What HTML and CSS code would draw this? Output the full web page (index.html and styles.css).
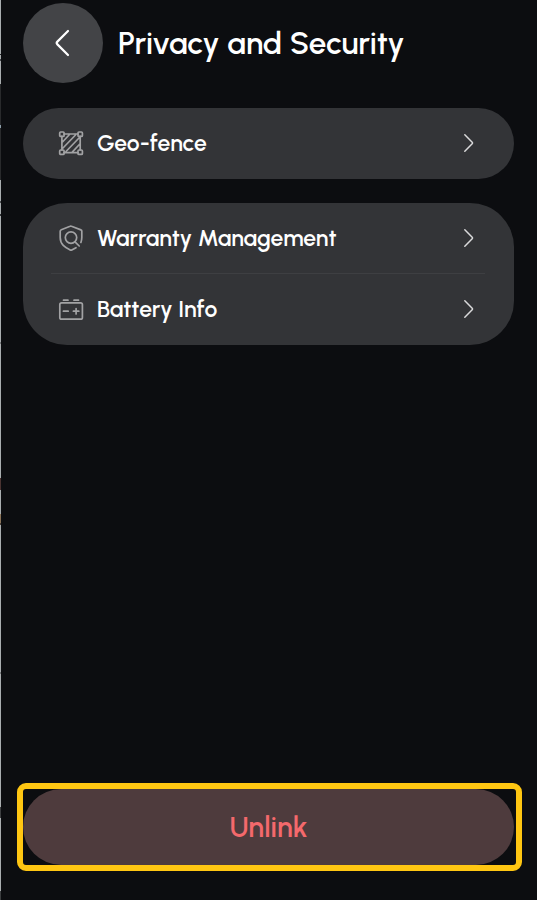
FILE: index.html
```html
<!DOCTYPE html>
<html lang="en">
<head>
    <meta charset="UTF-8">
    <meta name="viewport" content="width=device-width, initial-scale=1.0">
    <title>Privacy and Security</title>
    <link rel="stylesheet" href="styles.css">
</head>
<body>
    <div class="screen">
        <header class="header">
            <button class="back-btn" aria-label="Back">
                <svg width="80" height="80" viewBox="0 0 80 80">
                    <path d="M45 28 L34.4 38.6 Q33 40 34.4 41.4 L45 52"/>
                </svg>
            </button>
            <h1 class="title">Privacy and Security</h1>
        </header>

        <main class="menu">
            <section class="card">
                <a class="row">
                    <svg class="row-icon" width="26" height="28" viewBox="0 0 26 28">
                        <rect x="1.7" y="3" width="4.4" height="4.4" rx="1"/>
                        <rect x="20" y="3" width="4.4" height="4.4" rx="1"/>
                        <rect x="1.7" y="21" width="4.4" height="4.4" rx="1"/>
                        <rect x="20" y="21" width="4.4" height="4.4" rx="1"/>
                        <path d="M6 5H20M6 23.6H20M3.9 7.4V21M22.2 7.4V21M4.5 13 L11.5 5.5M4.5 19.5 L17.5 6M8 22.5 L21.5 8.5M14.5 22.8 L21.8 15"/>
                    </svg>
                    <span class="row-label">Geo-fence</span>
                    <svg class="chevron" width="12" height="20" viewBox="0 0 12 20">
                        <path d="M1.8 1.8 L9.2 9.2 Q10 10 9.2 10.8 L1.8 18.2"/>
                    </svg>
                </a>
            </section>

            <section class="card card-double">
                <a class="row">
                    <svg class="row-icon" width="26" height="28" viewBox="0 0 26 28">
                        <path d="M22.9 18.5 C23.4 17 23.8 15.5 23.8 13.5 V7.1 Q23.8 6.2 22.9 5.9 L13.5 2.2 Q12.8 1.9 12.1 2.2 L3.3 5.7 Q2.2 6.2 2.2 7.2 V13.5 C2.2 20.5 7 23.4 12.2 26 Q13 26.4 13.8 26 L18 23.7"/>
                        <circle cx="13" cy="13.6" r="5.7"/>
                        <path d="M17 17.8 L21.2 22"/>
                    </svg>
                    <span class="row-label">Warranty Management</span>
                    <svg class="chevron" width="12" height="20" viewBox="0 0 12 20">
                        <path d="M1.8 1.8 L9.2 9.2 Q10 10 9.2 10.8 L1.8 18.2"/>
                    </svg>
                </a>
                <div class="divider"></div>
                <a class="row">
                    <svg class="row-icon" width="26" height="28" viewBox="0 0 26 28">
                        <rect x="1.8" y="7.8" width="22.6" height="16.4" rx="1.8"/>
                        <path d="M5.5 5.2H10M16 5.2H20.5M5.4 16.2H10.2M15.4 16.2H20.8M18.1 13.5V18.9"/>
                    </svg>
                    <span class="row-label">Battery Info</span>
                    <svg class="chevron" width="12" height="20" viewBox="0 0 12 20">
                        <path d="M1.8 1.8 L9.2 9.2 Q10 10 9.2 10.8 L1.8 18.2"/>
                    </svg>
                </a>
            </section>
        </main>

        <div class="highlight">
            <button class="unlink-btn">Unlink</button>
        </div>
    </div>
</body>
</html>
```
FILE: styles.css
```css
* {
    box-sizing: border-box;
}

body {
    margin: 0;
    font-family: Urbanist, Lato, sans-serif;
    background: #0c0d10;
    color: #fff;
}

.screen {
    display: flex;
    flex-direction: column;
    height: 900px;
    padding: 3px 15px 29px 17px;
    /* sliver of the page behind the left edge */
    background: linear-gradient(to bottom,
        #a9adaf 0 54px, #25272a 54px 55px, #a9adaf 55px 59px, #45484b 59px 61px,
        #a9adaf 61px 84px, #292a2c 84px 125px, #8c9da8 125px 128px,
        #292a2c 128px 180px, #a9adaf 180px 201px, #4d4f51 201px 203px,
        #a9adaf 203px 214px, #35373a 214px 216px, #a9adaf 216px 342px,
        #77797b 342px 344px, #a9adaf 344px 478px, #4b3432 478px 490px,
        #a9adaf 490px 514px, #8b745a 514px 523px, #4b4038 523px 525px,
        #a9adaf 525px 672px, #77797b 672px 674px, #a9adaf 674px 807px,
        #3d3f41 807px 818px, #a9adaf 818px 891px, #3c3e40 891px) left top / 1px 900px no-repeat;
}

.header {
    display: flex;
    align-items: center;
    gap: 15px;
    height: 80px;
    padding-left: 6px;
}

.back-btn {
    width: 80px;
    height: 80px;
    padding: 0;
    border: none;
    border-radius: 50%;
    background: #434447;
}

.back-btn svg {
    display: block;
    fill: none;
    stroke: #fff;
    stroke-width: 2.2;
    stroke-linecap: round;
}

.title {
    margin: 0;
    padding-bottom: 1px;
    font-size: 31.4px;
    font-weight: 600;
    line-height: 40px;
    white-space: nowrap;
}

.menu {
    flex: 1;
    display: flex;
    flex-direction: column;
    gap: 24px;
    padding: 25px 8px 0 6px;
}

.card {
    height: 71px;
    padding: 0 29px 0 28px;
    border-radius: 44px;
    background: #333437;
}

.card-double {
    height: 142px;
}

.row {
    display: flex;
    align-items: center;
    height: 70px;
    padding: 0 10px 0 7px;
}

.row-icon,
.chevron {
    flex: none;
    fill: none;
    stroke-linecap: round;
    stroke-linejoin: round;
}

.row-icon {
    margin-right: 13px;
    stroke: #a2a2a4;
    stroke-width: 1.7;
}

.row-label {
    flex: 1;
    font-size: 22.9px;
    font-weight: 600;
    line-height: 30px;
    white-space: nowrap;
}

.chevron {
    stroke: #dadadb;
    stroke-width: 1.5;
}

.divider {
    height: 1px;
    background: #3e3f42;
}

.highlight {
    height: 88px;
    padding-right: 2px;
    border: 6px solid #ffc612;
    border-radius: 9px;
}

.unlink-btn {
    display: block;
    width: 100%;
    height: 76px;
    padding: 0;
    border: none;
    border-radius: 44px;
    background: #4e3b3d;
    color: #f4696c;
    font-family: inherit;
    font-size: 28.6px;
    font-weight: 600;
}
```
